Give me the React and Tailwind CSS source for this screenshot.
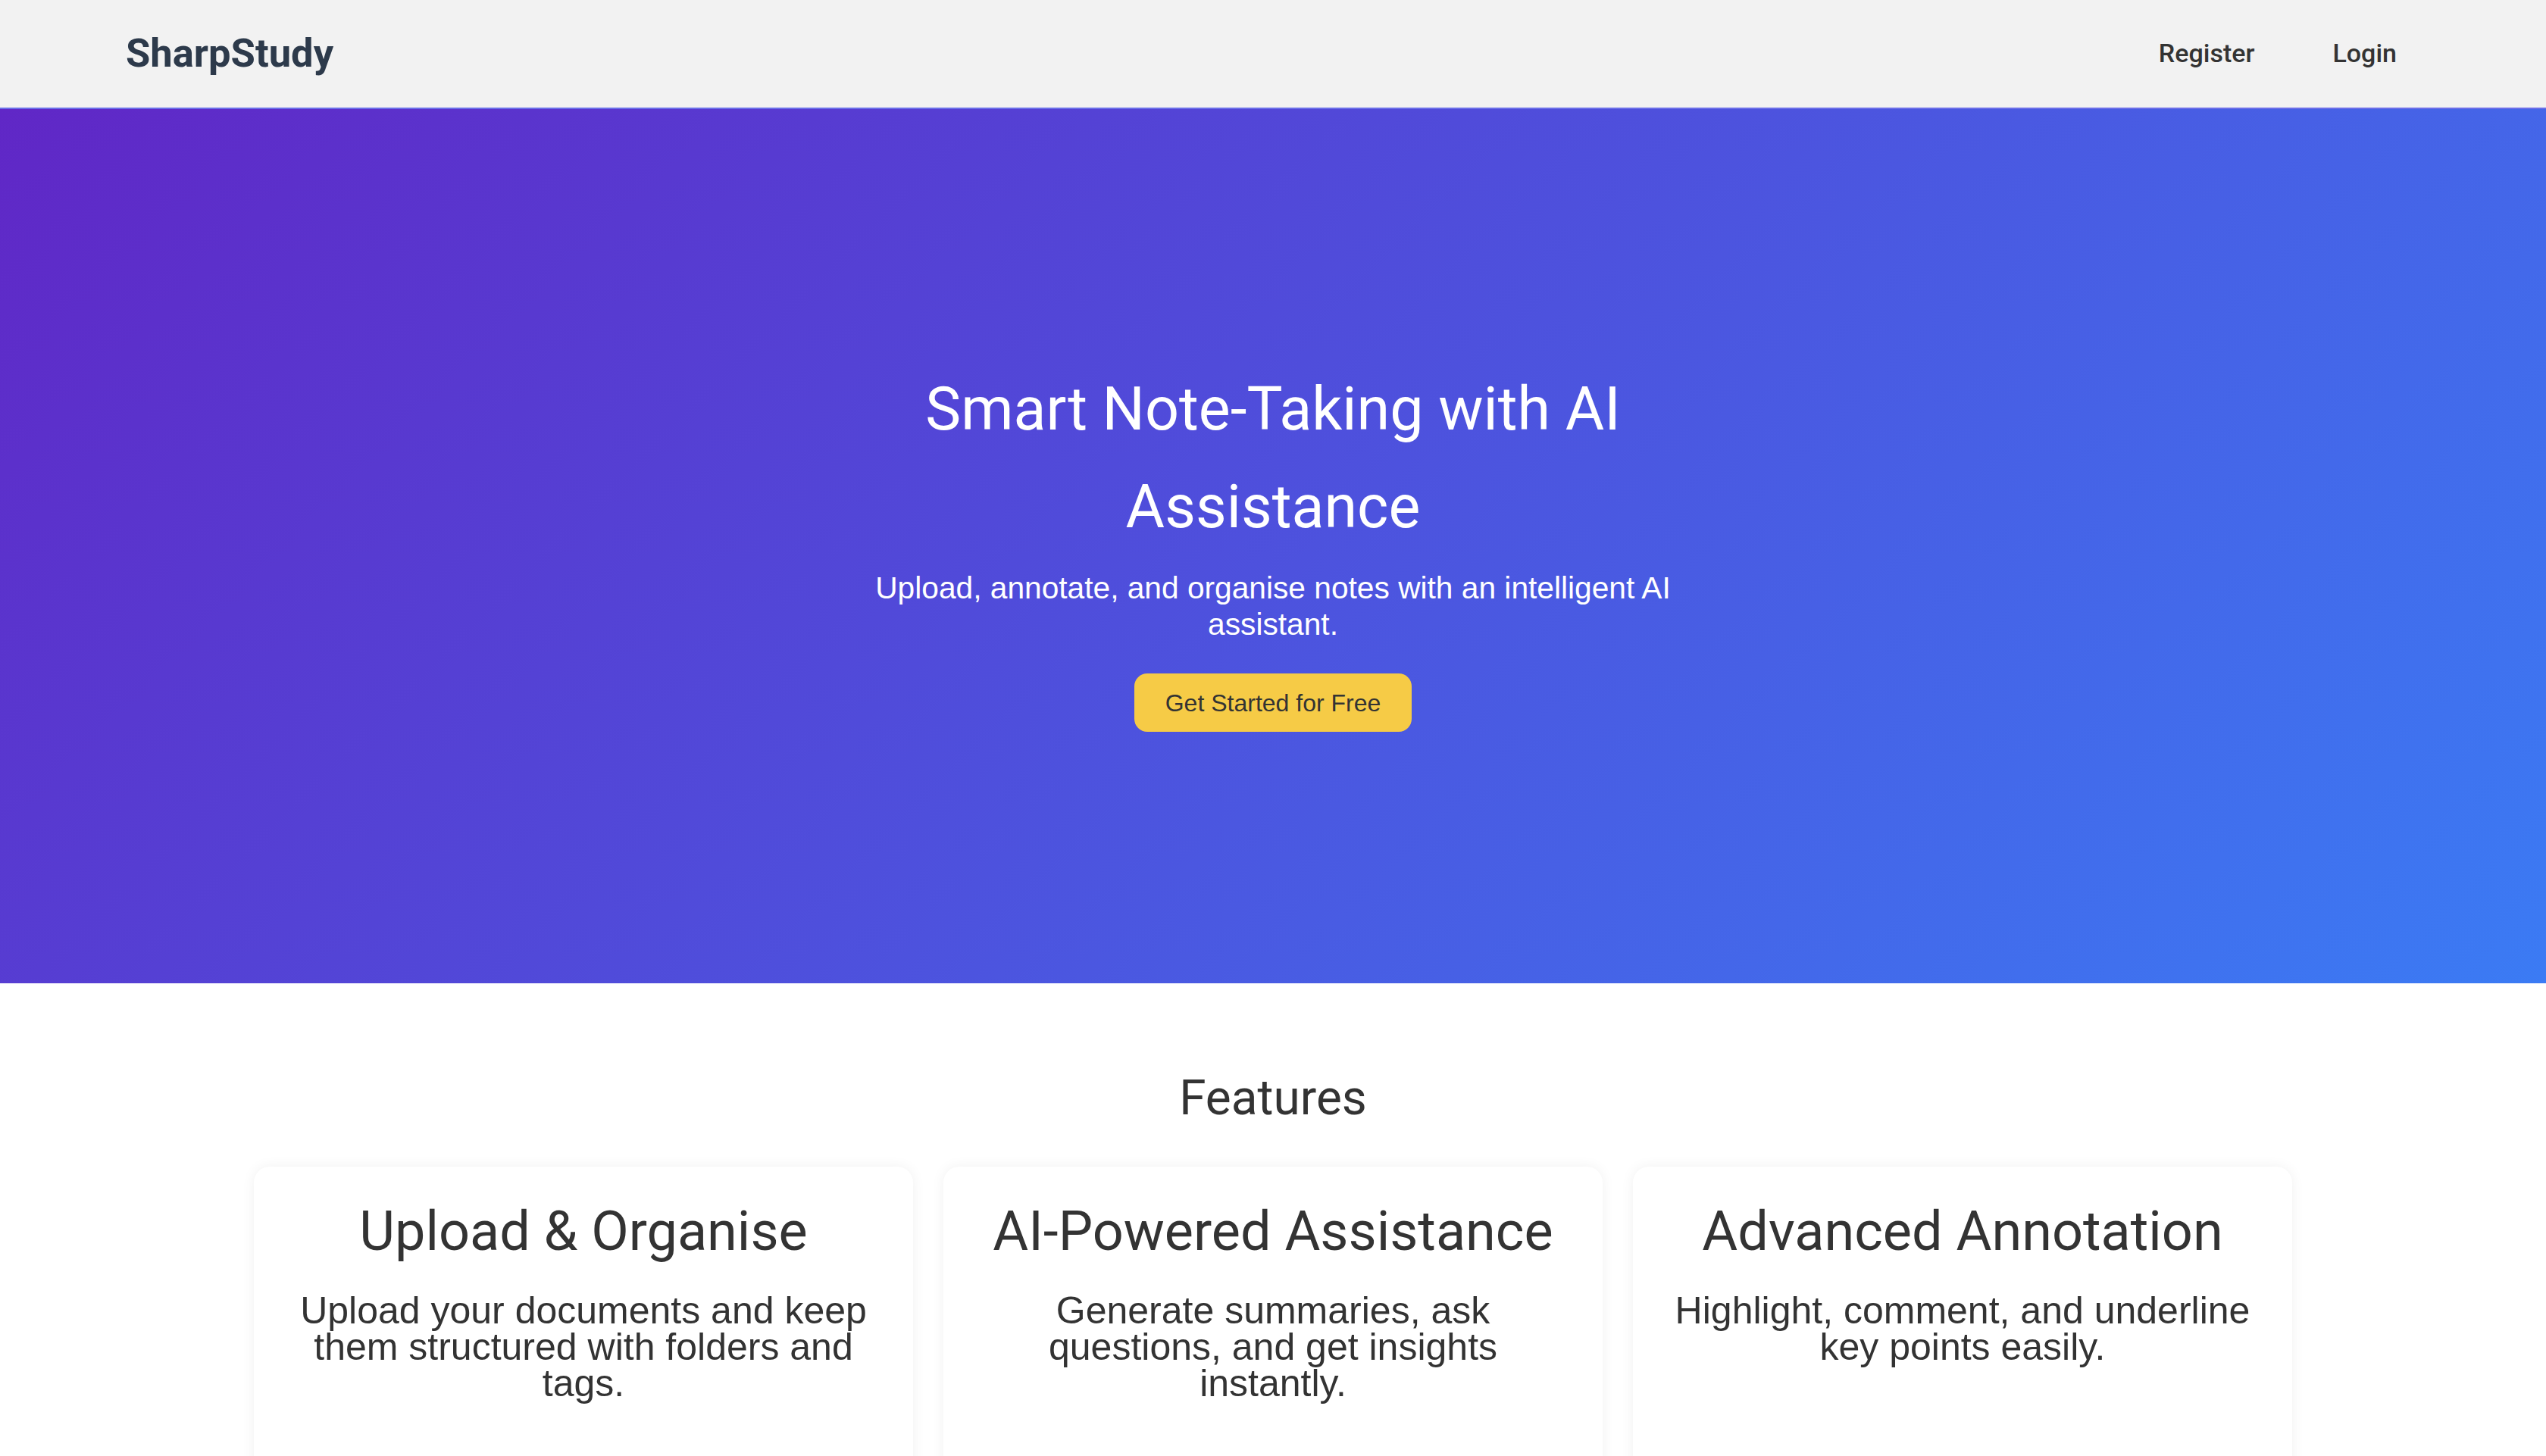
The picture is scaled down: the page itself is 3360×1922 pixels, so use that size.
export default function App() {
  const features = [
    {
      title: "Upload & Organise",
      text: "Upload your documents and keep them structured with folders and tags.",
    },
    {
      title: "AI-Powered Assistance",
      text: "Generate summaries, ask questions, and get insights instantly.",
    },
    {
      title: "Advanced Annotation",
      text: "Highlight, comment, and underline key points easily.",
    },
  ];

  return (
    <div className="min-h-screen bg-white font-['Roboto',sans-serif]">
      <nav className="flex items-center justify-between h-[144px] pl-[166px] pr-[197px] bg-[#f2f2f2] border-b-2 border-[#6a6ee8]">
        <div className="text-[52.5px] font-bold text-[#2d3a4b] font-['Roboto',sans-serif] -mt-[2px]">SharpStudy</div>
        <div className="flex items-center gap-[103px] -mt-[2px]">
          <a className="text-[34px] font-medium text-[#333333] cursor-pointer">Register</a>
          <a className="text-[34px] font-medium text-[#333333] cursor-pointer">Login</a>
        </div>
      </nav>

      <section className="bg-[linear-gradient(135deg,#6027c6,#3b7bf4)] py-[332px] flex flex-col items-center text-center text-white">
        <h1 className="max-w-[1071px] text-[79px] leading-[129px] font-normal font-['Roboto',sans-serif]">
          Smart Note-Taking with AI Assistance
        </h1>
        <p className="max-w-[1071px] mt-[18px] text-[40.7px] leading-[48px] font-['Liberation_Sans',Arial,sans-serif]">
          Upload, annotate, and organise notes with an intelligent AI assistant.
        </p>
        <button className="mt-[41px] h-[77px] px-[41px] rounded-[17px] bg-[#f6cb46] text-[#333333] text-[32px] font-['Liberation_Sans',Arial,sans-serif]">
          Get Started for Free
        </button>
      </section>

      <section className="pt-[114px] pb-[120px] flex flex-col items-center">
        <h2 className="text-[64px] leading-[75px] font-normal text-[#333333] font-['Roboto',sans-serif]">Features</h2>
        <div className="mt-[53px] w-[2690px] grid grid-cols-3 gap-[40px]">
          {features.map((f) => (
            <div
              key={f.title}
              className="rounded-[21px] bg-white shadow-[0_0_18px_rgba(0,0,0,0.06)] px-[43px] pt-[44px] pb-[110px] text-center"
            >
              <h3 className="text-[72px] leading-[84px] font-normal text-[#333333] font-['Roboto',sans-serif]">{f.title}</h3>
              <p className="mt-[38px] text-[50px] leading-[48px] text-[#333333] font-['Liberation_Sans',Arial,sans-serif]">
                {f.text}
              </p>
            </div>
          ))}
        </div>
      </section>
    </div>
  );
}
